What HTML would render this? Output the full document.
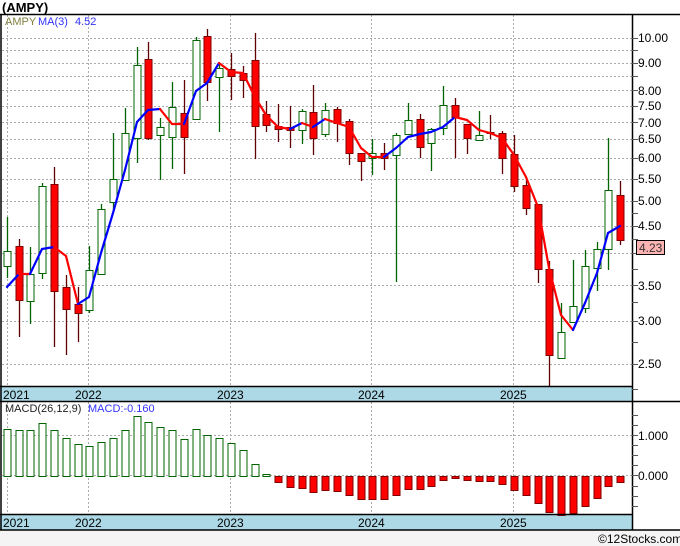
<!DOCTYPE html>
<html><head><meta charset="utf-8"><style>
html,body{margin:0;padding:0;background:#fff;}
svg{display:block;font-family:"Liberation Sans","DejaVu Sans",sans-serif;}
</style></head><body>
<svg id="s" width="680" height="546" viewBox="0 0 680 546" xmlns="http://www.w3.org/2000/svg">
<rect x="0" y="0" width="680" height="546" fill="#fff"/>
<rect x="0" y="530" width="680" height="16" fill="#f4f4f4"/>
<text x="2" y="12" font-size="13" font-weight="bold" fill="#000">(AMPY)</text>
<g id="grid" stroke="#aaa" stroke-dasharray="2,2" stroke-width="1"></g>
<rect x="0" y="387" width="632" height="14" fill="#add8e6"/>
<rect x="0" y="515" width="632" height="15" fill="#add8e6"/>
<g id="plot"></g>
<g stroke="#000" stroke-width="1.5" fill="none">
<line x1="0" y1="14.5" x2="680" y2="14.5"/>
<line x1="0" y1="386.5" x2="632" y2="386.5"/>
<line x1="0" y1="401.5" x2="680" y2="401.5"/>
<line x1="0" y1="514.5" x2="632" y2="514.5"/>
<line x1="0" y1="530" x2="680" y2="530"/>
<line x1="1" y1="14" x2="1" y2="530"/>
<line x1="632.5" y1="14" x2="632.5" y2="530"/>
</g>
<g id="ticks" stroke="#555" stroke-width="1"></g>
<g font-size="12" fill="#000">
<text x="3" y="399">2021</text><text x="75" y="399">2022</text><text x="217" y="399">2023</text><text x="358" y="399">2024</text><text x="500" y="399">2025</text>
<text x="3" y="527">2021</text><text x="75" y="527">2022</text><text x="217" y="527">2023</text><text x="358" y="527">2024</text><text x="500" y="527">2025</text>
<text x="638" y="42">10.00</text><text x="638" y="67">9.00</text><text x="638" y="95">8.00</text><text x="638" y="110">7.50</text><text x="638" y="127">7.00</text><text x="638" y="143">6.50</text><text x="638" y="162">6.00</text><text x="638" y="183">5.50</text><text x="638" y="205">5.00</text><text x="638" y="230">4.50</text><text x="638" y="290">3.50</text><text x="638" y="325">3.00</text><text x="638" y="368">2.50</text>
<text x="638" y="440">1.000</text><text x="638" y="480">0.000</text>
</g>
<rect x="636.5" y="240.5" width="28" height="14" fill="#ffb4b4" stroke="#000"/>
<text x="639" y="252" font-size="12" fill="#333">4.23</text>
<text x="5" y="25" font-size="11" fill="#808040">AMPY</text>
<text x="38" y="25" font-size="11" fill="#3333ff">MA(3)</text>
<text x="75" y="25" font-size="11" fill="#3333ff">4.52</text>
<text x="5" y="412" font-size="11" fill="#222">MACD(26,12,9)</text>
<text x="88" y="412" font-size="11" fill="#3333ff">MACD:-0.160</text>
<text x="598" y="543" font-size="12" fill="#000">©12Stocks.com</text>
</svg>
<script>
var NS="http://www.w3.org/2000/svg";
function el(p,t,a){var e=document.createElementNS(NS,t);for(var k in a)e.setAttribute(k,a[k]);p.appendChild(e);return e;}
var grid=document.getElementById('grid'),plot=document.getElementById('plot'),ticks=document.getElementById('ticks');
function py(p){return 38+(1-Math.log10(p))*541.5;}
[10,9.5,9,8.5,8,7.5,7,6.5,6,5.5,5,4.5,4,3.5,3,2.5].forEach(function(p){var y=Math.round(py(p))+.5;el(grid,'line',{x1:2,y1:y,x2:632,y2:y});});
[2.25,2.75,3.25,3.75,4.25,4.75].forEach(function(p){var y=Math.round(py(p))+.5;el(ticks,'line',{x1:632,y1:y,x2:638,y2:y});});
[10,9.5,9,8.5,8,7.5,7,6.5,6,5.5,5,4.5,4,3.5,3,2.5].forEach(function(p){var y=Math.round(py(p))+.5;el(ticks,'line',{x1:632,y1:y,x2:638,y2:y});});
[435.5,475.5].forEach(function(y){el(grid,'line',{x1:2,y1:y,x2:632,y2:y});});
[415,425,445,455,465,486,496,506].forEach(function(y){el(ticks,'line',{x1:632,y1:y+.5,x2:638,y2:y+.5});});
[435,475].forEach(function(y){el(ticks,'line',{x1:632,y1:y+.5,x2:638,y2:y+.5});});
[7,88,230,371,513].forEach(function(x){el(grid,'line',{x1:x+.5,y1:15,x2:x+.5,y2:386});el(grid,'line',{x1:x+.5,y1:402,x2:x+.5,y2:514});});
var C=[[7,1,251,266,217,278],[19,0,246,300,239,337],[30,1,274,301,247,324],[42,1,186,273,183,279],[54,0,184,291,167,347],[66,0,287,309,275,355],[78,0,304,313,287,342],[89,1,270,310,246,313],[101,1,209,274,204,274],[113,1,179,202,133,212],[125,1,133,180,108,180],[137,1,65,138,47,163],[148,0,59,138,42,140],[160,1,127,135,118,180],[172,1,107,137,82,169],[184,0,113,137,80,174],[196,1,40,119,37,119],[207,0,36,82,29,101],[219,1,68,77,63,132],[231,0,69,76,53,100],[243,0,73,80,66,98],[255,0,60,126,33,159],[266,0,114,125,101,132],[278,0,126,129,104,142],[290,0,127,130,106,148],[302,1,111,130,109,144],[313,0,112,138,85,155],[325,1,110,134,103,137],[337,0,109,123,107,142],[349,0,121,153,119,165],[361,0,153,161,153,181],[372,1,153,158,139,175],[384,0,153,158,143,170],[396,1,135,155,133,282],[408,1,120,134,103,134],[420,0,119,147,114,158],[431,1,129,143,128,171],[443,1,105,128,86,135],[455,0,105,117,98,158],[467,0,124,138,124,154],[479,1,135,140,111,141],[490,0,132,133,115,139],[502,0,133,158,131,174],[514,0,154,186,135,192],[526,0,185,208,179,215],[538,0,204,269,204,283],[549,0,269,355,261,387],[561,1,332,358,303,358],[573,1,306,322,260,322],[585,1,266,308,250,313],[597,1,249,268,242,291],[608,1,190,249,138,270],[620,0,195,240,181,245]];
C.forEach(function(c){var g=c[1],col=g?'#006400':'#600000';
el(plot,'line',{x1:c[0]+.5,y1:c[4],x2:c[0]+.5,y2:c[5],stroke:col,'stroke-width':1.3});
el(plot,'rect',{x:c[0]-3,y:c[2]+.5,width:7,height:Math.max(1,c[3]-c[2]),fill:g?'#fff':'#ff0000',stroke:g?'#006400':'#800000','stroke-width':1});});
var MA=[287,274,274,249,247,256,304,297,253,213,170,122,110,109,124,124,91,83,63,72,73,73,97,115,127,129,123,127,119,123,127,148,157,157,148,137,134,132,127,117,118,120,130,133,138,155,177,207,268,315,330,303,273,233,226];
MA=MA.slice(0,20).concat(MA.slice(21,40)).concat(MA.slice(41));
for(var i=1;i<C.length&&i<MA.length;i++){var up=MA[i]<MA[i-1];
el(plot,'line',{x1:C[i-1][0],y1:MA[i-1],x2:C[i][0],y2:MA[i],stroke:up?'#0000ff':'#ff0000','stroke-width':2.2,'stroke-linecap':'round'});}
var M=[429,430,430,423,430,438,444,446,442,438,430,416,422,427,430,439,429,435,438,443,450,464,474,482,487,488,492,490,491,495,499,499,499,495,489,489,486,480,478,480,481,481,484,490,495,503,512,515,513,506,498,486,482];
M.forEach(function(v,i){var x=C[i][0]-3;if(v<476){el(plot,'rect',{x:x,y:v+.5,width:7,height:476-v,fill:'#fff',stroke:'#006400'});}else{el(plot,'rect',{x:x,y:476.5,width:7,height:v-476,fill:'#ff0000',stroke:'#800000'});}});
</script>
</body></html>
